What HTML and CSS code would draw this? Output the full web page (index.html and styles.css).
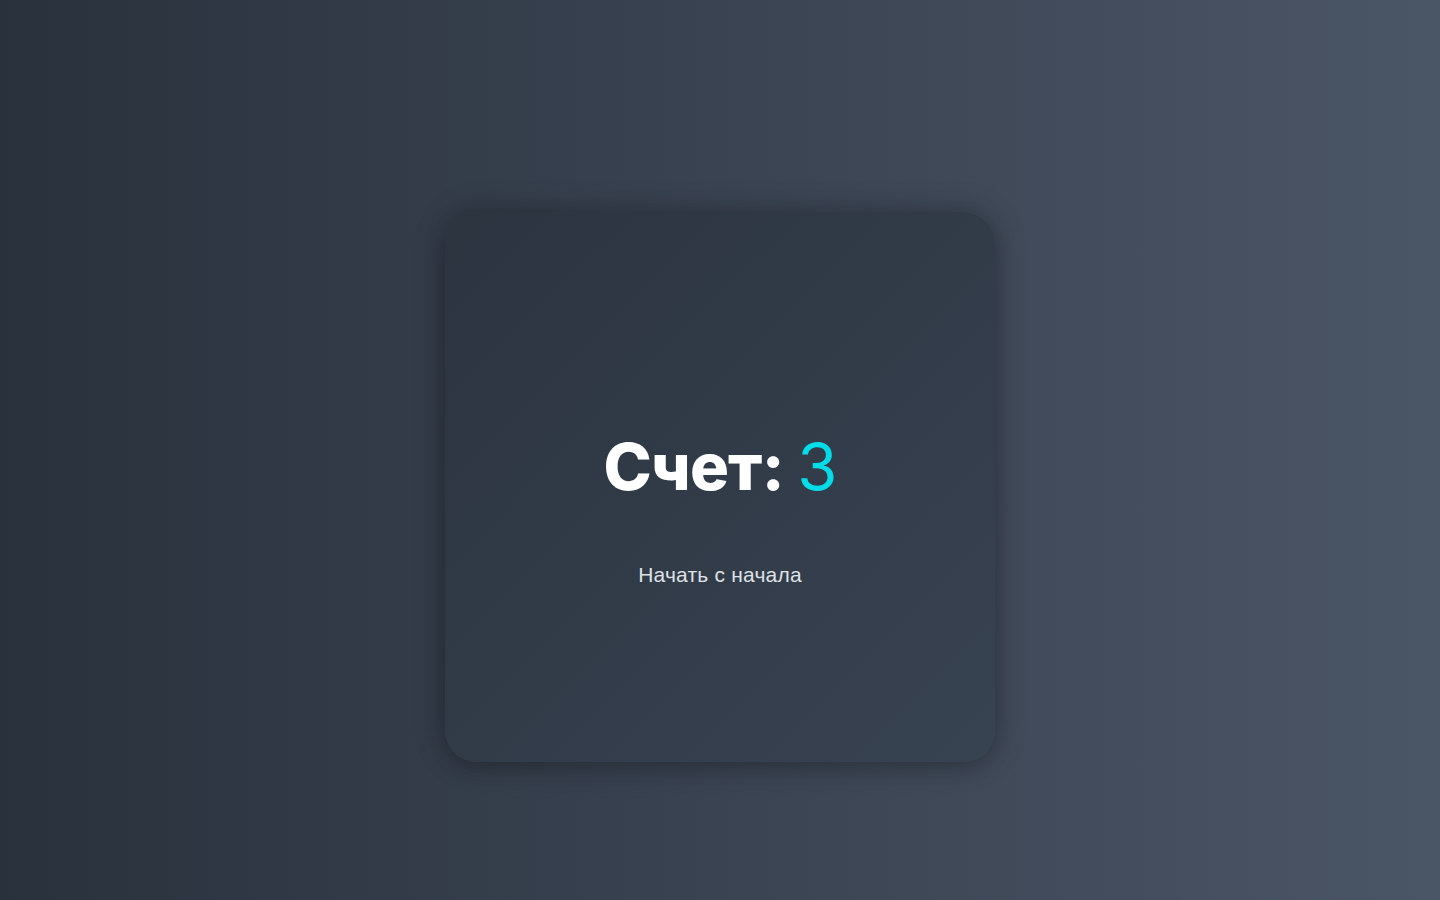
FILE: index.html
```html
<!DOCTYPE html>
<html lang="ru">
<head>
<meta charset="utf-8">
<title>Счет</title>
<link rel="stylesheet" href="styles.css">
</head>
<body>
<main class="page">
  <section class="card">
    <h1 class="score">Счет: <span class="score-value">3</span></h1>
    <button class="restart" type="button">Начать с начала</button>
  </section>
</main>
</body>
</html>
```
FILE: styles.css
```css
html, body {
  margin: 0;
  padding: 0;
  height: 100%;
}
body {
  background: linear-gradient(to right, #29313c 0%, #4a5566 100%);
  font-family: Inter, "Liberation Sans", sans-serif;
}
.page {
  height: 100%;
  display: flex;
  align-items: center;
  justify-content: center;
  padding-top: 74px;
  box-sizing: border-box;
}
.card {
  width: 550px;
  height: 550px;
  border-radius: 32px;
  background: linear-gradient(135deg, #2b343f 0%, #384352 100%);
  box-shadow: 0 0 30px rgba(0, 0, 0, 0.26), 0 6px 20px rgba(0, 0, 0, 0.12);
  display: flex;
  flex-direction: column;
  align-items: center;
  justify-content: center;
  box-sizing: border-box;
  padding-top: 46px;
}
.score {
  margin: 0;
  font-size: 65px;
  font-weight: 800;
  line-height: 1;
  color: #ffffff;
  letter-spacing: -0.8px;
}
.score-value {
  color: #00dce8;
  font-weight: 400;
}
.restart {
  margin-top: 64px;
  background: none;
  border: none;
  padding: 0;
  font-family: "Liberation Sans", Arial, sans-serif;
  font-size: 21px;
  letter-spacing: 0.2px;
  color: #dfe1e4;
  cursor: pointer;
}
```
